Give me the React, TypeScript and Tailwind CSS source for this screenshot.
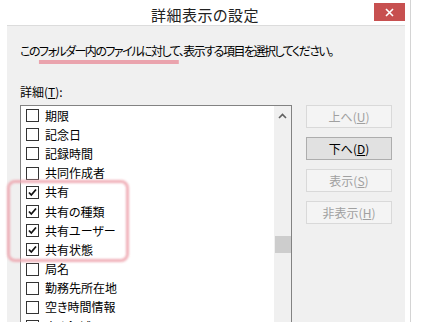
import React from "react";

const items: { label: string; checked: boolean }[] = [
  { label: "期限", checked: false },
  { label: "記念日", checked: false },
  { label: "記録時間", checked: false },
  { label: "共同作成者", checked: false },
  { label: "共有", checked: true },
  { label: "共有の種類", checked: true },
  { label: "共有ユーザー", checked: true },
  { label: "共有状態", checked: true },
  { label: "局名", checked: false },
  { label: "勤務先所在地", checked: false },
  { label: "空き時間情報", checked: false },
  { label: "空き領域", checked: false },
];

function Check({ checked }: { checked: boolean }) {
  return (
    <div className="w-[13px] h-[13px] border border-[#333333] bg-white flex items-center justify-center shrink-0">
      {checked && (
        <svg width="11" height="11" viewBox="0 0 11 11">
          <path d="M2 5.5 L4.3 8 L9 2.5" fill="none" stroke="#111" strokeWidth="1.8" />
        </svg>
      )}
    </div>
  );
}

function Btn({ label, k, enabled }: { label: string; k: string; enabled?: boolean }) {
  return (
    <div
      className={
        "h-[23px] w-[86px] flex items-center justify-center text-[12px] border " +
        (enabled
          ? "bg-[#e1e1e1] border-[#adadad] text-black"
          : "bg-[#f4f4f4] border-[#d9d9d9] text-[#a0a0a0]")
      }
    >
      {label}(<u>{k}</u>)
    </div>
  );
}

export default function App() {
  return (
    <div
      className="w-[430px] h-[322px] bg-white overflow-hidden relative [font-feature-settings:'palt'] text-black"
      style={{ fontFamily: '"Noto Sans CJK JP", "Noto Sans", sans-serif' }}
    >
      <div className="w-[411px] h-full border-r border-[#d4d4d4] flex flex-col">
        <div className="h-[31px] relative flex items-start justify-center pt-[5px]">
          <span className="text-[15px] leading-[20px] text-[#222] tracking-[0.5px]">詳細表示の設定</span>
          <div className="absolute left-[374px] top-[3px] w-[31px] h-[18px] bg-[#c75050] flex items-center justify-center">
            <svg width="9" height="9" viewBox="0 0 9 9">
              <path d="M1 1 L8 8 M8 1 L1 8" stroke="#fff" strokeWidth="1.6" />
            </svg>
          </div>
        </div>
        <div className="ml-[7px] w-[398px] flex-1 bg-[#f0f0f0] border-t border-[#dcdcdc] pl-[13px] pt-[16px] flex flex-col">
          <div className="text-[12px] leading-[18px] tracking-[-1.5px]">
            この
            <span className="underline decoration-[#eaa3ad] decoration-[4px] underline-offset-[4px]">
              フォルダー内のファイルに対して
            </span>
            、表示する項目を選択してください。
          </div>
          <div className="text-[12px] leading-[18px] mt-[23px]">
            詳細(<u>T</u>):
          </div>
          <div className="flex mt-[4px] gap-[14px]">
            <div className="w-[272px] h-[230px] border border-[#828282] bg-white flex">
              <div className="flex-1 flex flex-col">
                {items.map((it) => (
                  <div key={it.label} className="h-[19.2px] flex items-center pl-[5px] gap-[6px] shrink-0">
                    <Check checked={it.checked} />
                    <span className="text-[12px] leading-none">{it.label}</span>
                  </div>
                ))}
              </div>
              <div className="w-[17px] bg-[#f0f0f0] flex flex-col items-center">
                <svg width="9" height="6" viewBox="0 0 9 6" className="mt-[7px]">
                  <path d="M1 5 L4.5 1.5 L8 5" fill="none" stroke="#606060" strokeWidth="1.6" />
                </svg>
                <div className="mt-[117px] w-[16px] h-[17px] bg-[#cdcdcd]" />
              </div>
            </div>
            <div className="flex flex-col gap-[9px]">
              <Btn label="上へ" k="U" />
              <Btn label="下へ" k="D" enabled />
              <Btn label="表示" k="S" />
              <Btn label="非表示" k="H" />
            </div>
          </div>
        </div>
      </div>
      <div className="absolute left-[7px] top-[180px] w-[122px] h-[82px] rounded-[8px] border-[3px] border-[#eea7b0] blur-[0.8px] opacity-90" />
    </div>
  );
}
